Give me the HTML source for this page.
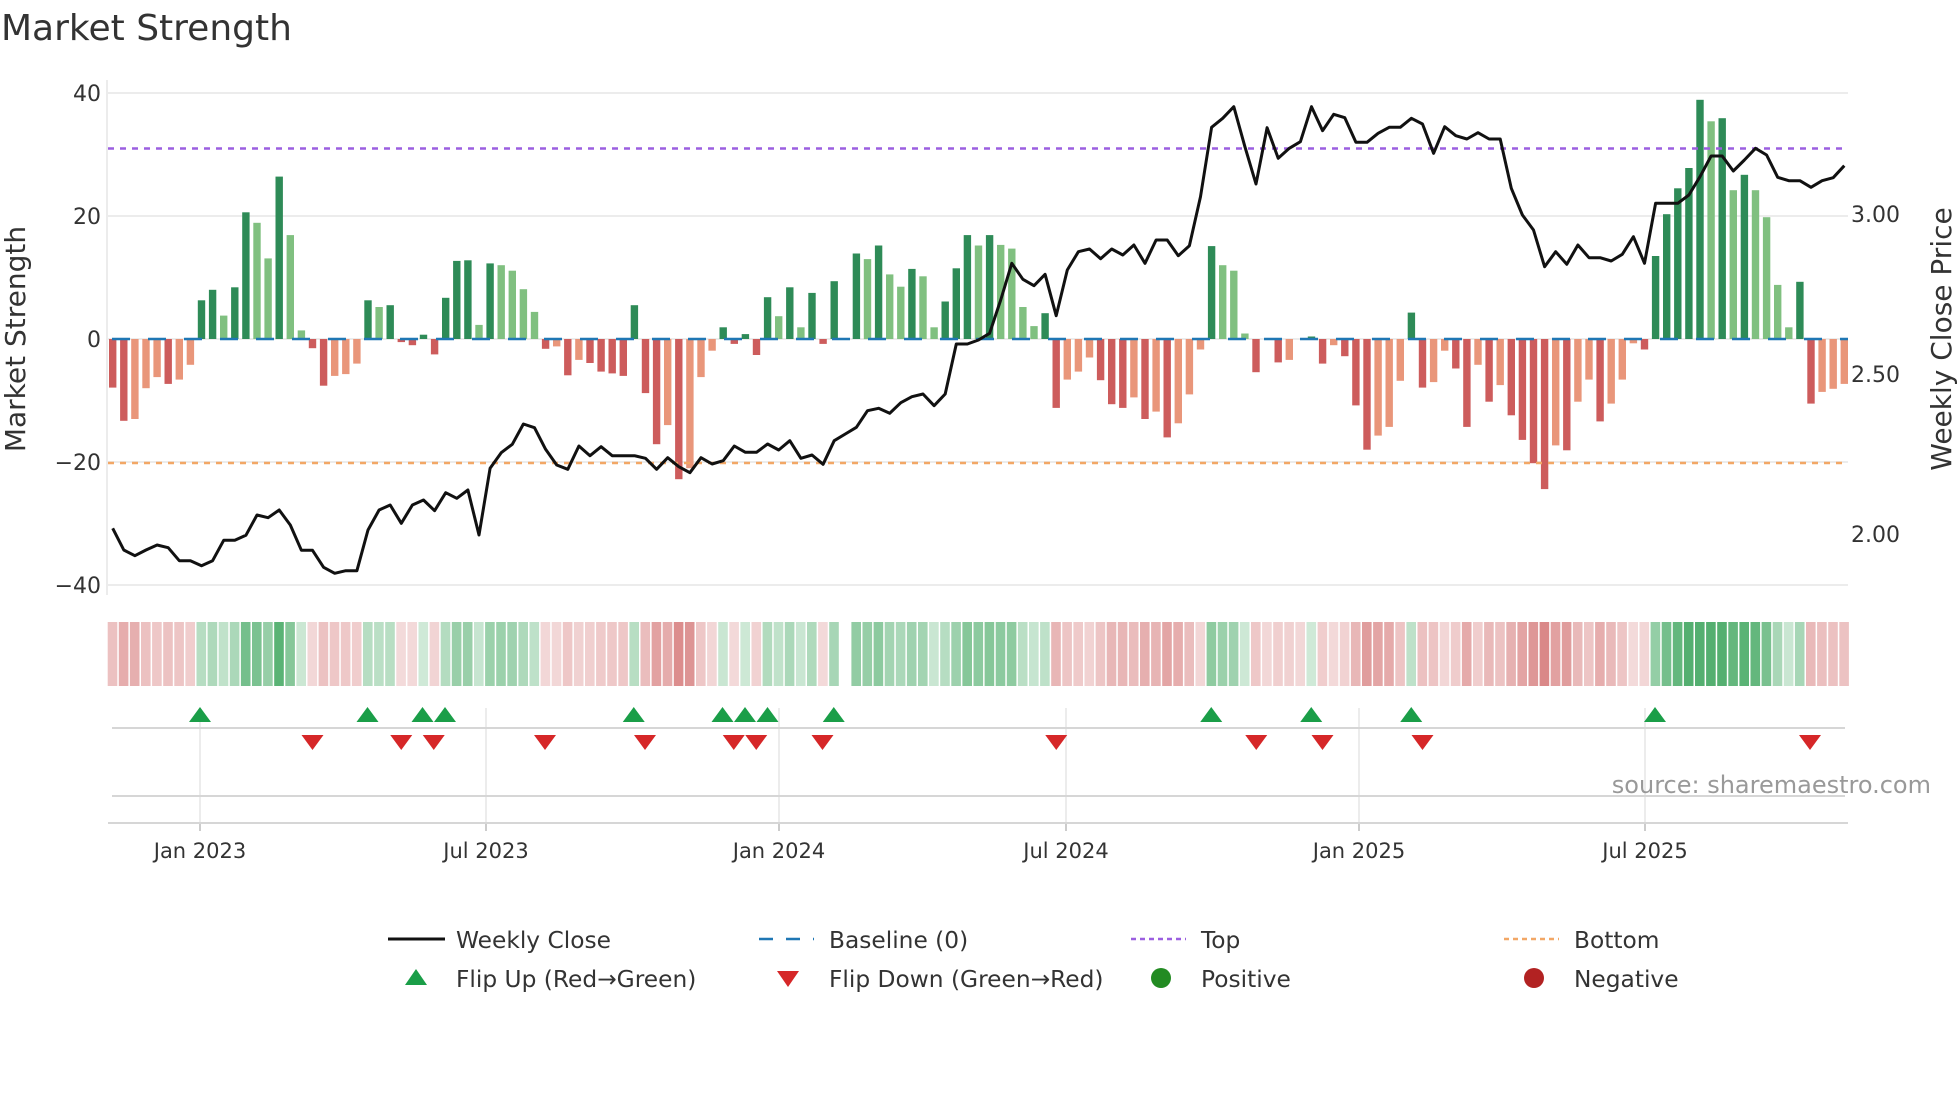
<!DOCTYPE html>
<html><head><meta charset="utf-8"><style>
html,body{margin:0;padding:0;background:#fff;}
svg{display:block;font-family:"DejaVu Sans","Liberation Sans",sans-serif;}
</style></head><body>
<svg id="c" width="1960" height="1102" viewBox="0 0 1960 1102" xmlns="http://www.w3.org/2000/svg">
<rect width="1960" height="1102" fill="#fff"/>
<text x="1" y="40" font-size="36" fill="#333">Market Strength</text>
<g stroke="#ececec" stroke-width="2">
<line x1="108" y1="93" x2="1848" y2="93"/>
<line x1="108" y1="216" x2="1848" y2="216"/>
<line x1="108" y1="339" x2="1848" y2="339"/>
<line x1="108" y1="462" x2="1848" y2="462"/>
<line x1="108" y1="585" x2="1848" y2="585"/>
<line x1="107" y1="80" x2="107" y2="595"/>
</g>
<g font-size="22" fill="#333" text-anchor="end">
<text x="101" y="101">40</text><text x="101" y="224">20</text><text x="101" y="347">0</text>
<text x="101" y="470">−20</text><text x="101" y="593">−40</text>
</g>
<g font-size="22" fill="#333">
<text x="1851" y="222">3.00</text><text x="1851" y="382">2.50</text><text x="1851" y="542">2.00</text>
</g>
<text transform="translate(25,339) rotate(-90)" font-size="28" fill="#333" text-anchor="middle">Market Strength</text>
<text transform="translate(1951,339) rotate(-90)" font-size="28" fill="#333" text-anchor="middle">Weekly Close Price</text>
<g id="bars"></g>
<line x1="108" y1="148.5" x2="1848" y2="148.5" stroke="#9b5fe0" stroke-width="2.5" stroke-dasharray="6,6"/>
<line x1="108" y1="463" x2="1848" y2="463" stroke="#f2a766" stroke-width="2.5" stroke-dasharray="6,6"/>
<line x1="112" y1="339" x2="1848" y2="339" stroke="#1f77b4" stroke-width="2.5" stroke-dasharray="18,18"/>
<polyline id="price" fill="none" stroke="#111" stroke-width="3" stroke-linejoin="round"/>
<g id="strip"></g>
<g stroke="#e6e6e6" stroke-width="1.5" id="vgrid"></g>
<line x1="112" y1="728" x2="1845" y2="728" stroke="#d6d6d6" stroke-width="2"/>
<line x1="112" y1="796" x2="1845" y2="796" stroke="#d6d6d6" stroke-width="2"/>
<line x1="108" y1="823" x2="1848" y2="823" stroke="#d6d6d6" stroke-width="2"/>
<g id="marks"></g>
<g font-size="21" fill="#333" text-anchor="middle" id="ticks"></g>
<text x="1931" y="793" font-size="24" fill="#999" text-anchor="end">source: sharemaestro.com</text>
<g font-size="23.3" fill="#333">
<line x1="388" y1="939" x2="445" y2="939" stroke="#111" stroke-width="3"/>
<text x="456" y="948">Weekly Close</text>
<line x1="759" y1="939" x2="814" y2="939" stroke="#1f77b4" stroke-width="2.5" stroke-dasharray="14,13"/>
<text x="829" y="948">Baseline (0)</text>
<line x1="1131" y1="939" x2="1186" y2="939" stroke="#9b5fe0" stroke-width="2.5" stroke-dasharray="5,4"/>
<text x="1201" y="948">Top</text>
<line x1="1504" y1="939" x2="1559" y2="939" stroke="#f2a766" stroke-width="2.5" stroke-dasharray="5,4"/>
<text x="1574" y="948">Bottom</text>
<polygon points="405,985 427,985 416,969" fill="#1a9e48"/>
<text x="456" y="987">Flip Up (Red→Green)</text>
<polygon points="777,971 799,971 788,987" fill="#d62728"/>
<text x="829" y="987">Flip Down (Green→Red)</text>
<circle cx="1161" cy="978" r="10" fill="#228b22"/>
<text x="1201" y="987">Positive</text>
<circle cx="1534" cy="978" r="10" fill="#b22222"/>
<text x="1574" y="987">Negative</text>
</g>
</svg>
<script>
var V=[-7.9,-13.3,-13,-8,-6.2,-7.3,-6.6,-4.2,6.3,8,3.8,8.4,20.6,18.9,13.1,26.4,16.9,1.4,-1.5,-7.6,-6,-5.7,-4,6.3,5.2,5.5,-0.5,-1,0.7,-2.5,6.7,12.7,12.8,2.3,12.3,12,11.1,8.1,4.4,-1.6,-1.2,-5.9,-3.4,-3.9,-5.3,-5.6,-6,5.5,-8.8,-17.1,-14,-22.8,-21,-6.2,-1.9,1.9,-0.8,0.8,-2.6,6.8,3.7,8.4,1.9,7.5,-0.8,9.4,0,13.9,13,15.2,10.5,8.5,11.4,10.2,1.9,6.1,11.5,16.9,15.2,16.9,15.3,14.7,5.2,2.1,4.2,-11.2,-6.6,-5.3,-3,-6.7,-10.6,-11.2,-9.5,-13,-11.8,-16,-13.7,-9,-1.7,15.1,12,11.1,0.9,-5.4,0,-3.8,-3.4,0,0.4,-4,-1,-2.8,-10.8,-18,-15.7,-14.3,-6.8,4.3,-7.9,-7,-1.9,-4.8,-14.3,-4.2,-10.2,-7.5,-12.4,-16.4,-20.2,-24.4,-17.3,-18.1,-10.2,-6.6,-13.4,-10.5,-6.6,-0.7,-1.7,13.5,20.3,24.5,27.8,38.9,35.4,35.9,24.2,26.7,24.2,19.8,8.8,1.9,9.3,-10.5,-8.6,-8.1,-7.3];
var D="ddllldlldd"+"lddlldlldd"+"llldlddddd"+"dddldlllld"+"ldlddddddd"+"ldlllddddd"+"ldldddddld"+"lldlldddld"+"llllddllld"+"ddldldllld"+"llldddlddd"+"ldddlllddl"+"lddldldddd"+"ldlldllldd"+"ddddldldll"+"llddlll";
var P=[1345,1410,1427,1410,1395,1403,1442,1442,1457,1442,1381,1381,1366,1305,1313,1290,1335,1411,1411,1462,1480,1472,1472,1350,1290,1275,1330,1275,1260,1292,1238,1255,1230,1365,1165,1118,1093,1032,1043,1108,1155,
1168,1098,1127,1100,1127,1127,1127,1135,1168,1133,1160,1178,1133,1152,1142,1098,1117,1117,1092,1110,1082,1135,1125,1153,1082,1062,1042,992,985,1000,968,950,942,977,942,792,792,780,760,660,
550,598,617,583,707,570,515,507,536,507,525,495,550,480,480,527,497,350,142,115,80,200,312,143,235,205,185,80,152,103,113,187,187,160,142,142,115,132,
220,140,167,177,158,177,177,325,405,450,560,515,553,495,533,533,543,523,470,550,370,370,370,345,290,228,228,273,240,205,225,292,302,302,322,302,293,257];
var NS="http://www.w3.org/2000/svg";
function el(t,a,p){var e=document.createElementNS(NS,t);for(var k in a)e.setAttribute(k,a[k]);p.appendChild(e);return e;}
var bars=document.getElementById("bars"),strip=document.getElementById("strip");
var pts=[];
for(var i=0;i<V.length;i++){
 var x=112.7+i*11.1,v=V[i],h=v*6.15,dk=D[i]!=="l";
 var c=v>=0?(dk?"#2e8b57":"#80c080"):(dk?"#cd5c5c":"#e9967a");
 if(v!==0) el("rect",{x:(x-3.7).toFixed(1),y:(v>0?339-h:339).toFixed(1),width:7.4,height:Math.abs(h).toFixed(1),fill:c},bars);
 pts.push(x.toFixed(1)+","+(80+P[i]/3).toFixed(1));
 if(i!==66){
  var a=0.22+0.6*Math.min(Math.abs(v)/28,1);
  var f=v>=0?"rgba(46,158,80,"+a.toFixed(2)+")":"rgba(205,95,95,"+a.toFixed(2)+")";
  if(v===0) f="rgba(205,95,95,0.25)";
  el("rect",{x:(x-5).toFixed(1),y:622,width:9.6,height:64,fill:f},strip);
 }
}
document.getElementById("price").setAttribute("points",pts.join(" "));
var ticks=[[200,"Jan 2023"],[486,"Jul 2023"],[779,"Jan 2024"],[1066,"Jul 2024"],[1359,"Jan 2025"],[1645,"Jul 2025"]];
var vg=document.getElementById("vgrid"),tg=document.getElementById("ticks");
ticks.forEach(function(t){
 el("line",{x1:t[0],y1:708,x2:t[0],y2:823},vg);
 el("line",{x1:t[0],y1:823,x2:t[0],y2:831,stroke:"#bbb"},vg);
 var tx=el("text",{x:t[0],y:858},tg);tx.textContent=t[1];
});
var ups=[160,294,338,356,507,578,596,614,667,969,1049,1129,1324];
var dns=[250,321,347,436,516,587,605,658,845,1005,1058,1138,1448];
var mk=document.getElementById("marks");
ups.forEach(function(d){var x=d*1.25;el("polygon",{points:(x-11)+",722 "+(x+11)+",722 "+x+",707",fill:"#1a9e48"},mk);});
dns.forEach(function(d){var x=d*1.25;el("polygon",{points:(x-11)+",735 "+(x+11)+",735 "+x+",750",fill:"#d62728"},mk);});
</script>
</body></html>
